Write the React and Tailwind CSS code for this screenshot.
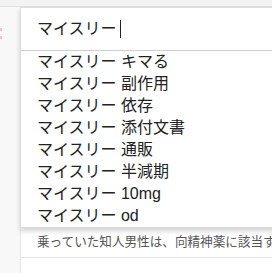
import React from 'react';

const suggestions = ['キマる', '副作用', '依存', '添付文書', '通販', '半減期', '10mg', 'od'];

export default function App() {
  return (
    <div
      className="relative w-[272px] h-[273px] overflow-hidden bg-[#f8f8f8]"
      style={{ fontFamily: '"Liberation Sans", "Noto Sans CJK JP", sans-serif' }}
    >
      {/* page behind the dropdown */}
      <div className="h-[7px] bg-[#f3f3f3] border-b border-[#e2e2e2]" />
      <div className="ml-[20px] h-[266px] bg-white border-l border-[#e6e6e6] flex flex-col">
        <div className="h-[221px]" />
        <div className="pl-[16px] h-[30px] flex items-center text-[12.6px] text-[#555] whitespace-nowrap border-b border-[#e4e4e4]">
          乗っていた知人男性は、向精神薬に該当す
        </div>
      </div>

      {/* faint red mark at the far left */}
      <div className="absolute left-0 top-[28px] w-[2px] h-[3px] bg-[#f0c4c4]" />
      <div className="absolute left-0 top-[36px] w-[2px] h-[3px] bg-[#f0c4c4]" />

      {/* autocomplete popup */}
      <div className="absolute left-[20px] top-[7px] w-[300px] bg-white border border-[#dcdcdc] shadow-[0_3px_5px_rgba(0,0,0,0.18)]">
        <div className="h-[43px] pl-[16px] flex items-center text-[16px] text-[#222] border-b border-[#cfcfcf]">
          <span>マイスリー</span>
          <span className="ml-[3px] w-px h-[18px] bg-[#222]" />
        </div>
        <ul>
          {suggestions.map((s) => (
            <li key={s} className="h-[22px] pl-[16px] flex items-center text-[16px] text-[#222] whitespace-nowrap">
              マイスリー {s}
            </li>
          ))}
        </ul>
      </div>
    </div>
  );
}
